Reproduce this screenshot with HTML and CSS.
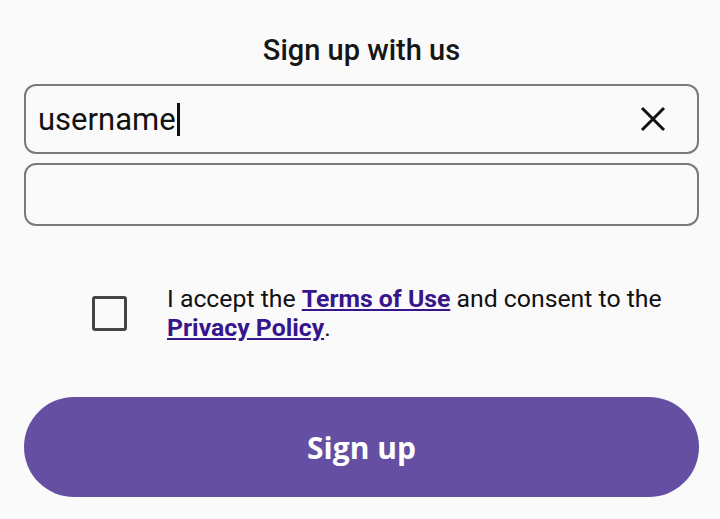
FILE: index.html
```html
<!DOCTYPE html>
<html>
	<head>
	<meta name="viewport" content="width=device-width, initial-scale=1.0"/>
	<link rel="stylesheet" href="styles.css">
	</head>
	<body>
		<div class="page">
			<div class="title">Sign up with us</div>

			<div class="field first">
				<span class="value">username</span><span class="caret"></span>
				<svg class="clear" width="28" height="28" viewBox="0 0 28 28">
					<path d="M3 3 L25 25 M25 3 L3 25" stroke="#111" stroke-width="3" fill="none"/>
				</svg>
			</div>
			<div class="field second"></div>

			<div class="consent">
				<div class="check"></div>
				<div class="terms">
					I accept the <a href="#">Terms of Use</a> and consent to the
					<a href="#">Privacy Policy</a>.
				</div>
			</div>

			<div class="button">Sign up</div>
		</div>
	</body>
</html>
```

FILE: styles.css
```css
	body {
		margin: 0;
		background-color: #fafafa;
		font-family: Roboto, "Liberation Sans", sans-serif;
		color: #1a1a1a;
	}

	.page {
		display: flex;
		flex-direction: column;
		padding: 33px 21px 0 24px;
	}

	.title {
		text-align: center;
		font-size: 29px;
		font-weight: 500;
		line-height: 34px;
		color: #161616;
	}

	.field {
		display: flex;
		align-items: center;
		box-sizing: border-box;
		border: 2px solid #7a7a7a;
		border-radius: 12px;
	}

	.field.first {
		margin-top: 17px;
		height: 70px;
		padding: 0 30px 0 12px;
	}

	.field.second {
		margin-top: 9px;
		height: 63px;
	}

	.value {
		font-size: 31px;
		color: #111;
	}

	.caret {
		width: 3px;
		height: 33px;
		margin-left: 1px;
		background-color: #111;
	}

	.clear {
		margin-left: auto;
	}

	.consent {
		display: flex;
		align-items: center;
		margin-top: 58px;
		padding-left: 68px;
	}

	.check {
		flex: none;
		box-sizing: border-box;
		width: 35px;
		height: 35px;
		border: 3.5px solid #444;
		border-radius: 3px;
	}

	.terms {
		margin-left: 40px;
		font-size: 24.8px;
		line-height: 29px;
		color: #111;
	}

	.terms a {
		color: #37168c;
		font-weight: bold;
		text-decoration: underline;
	}

	.button {
		display: flex;
		align-items: center;
		justify-content: center;
		margin-top: 55px;
		height: 100px;
		border-radius: 50px;
		background-color: #654fa3;
		color: #ffffff;
		font-family: "Open Sans", sans-serif;
		font-weight: 700;
		font-size: 30px;
	}
```
